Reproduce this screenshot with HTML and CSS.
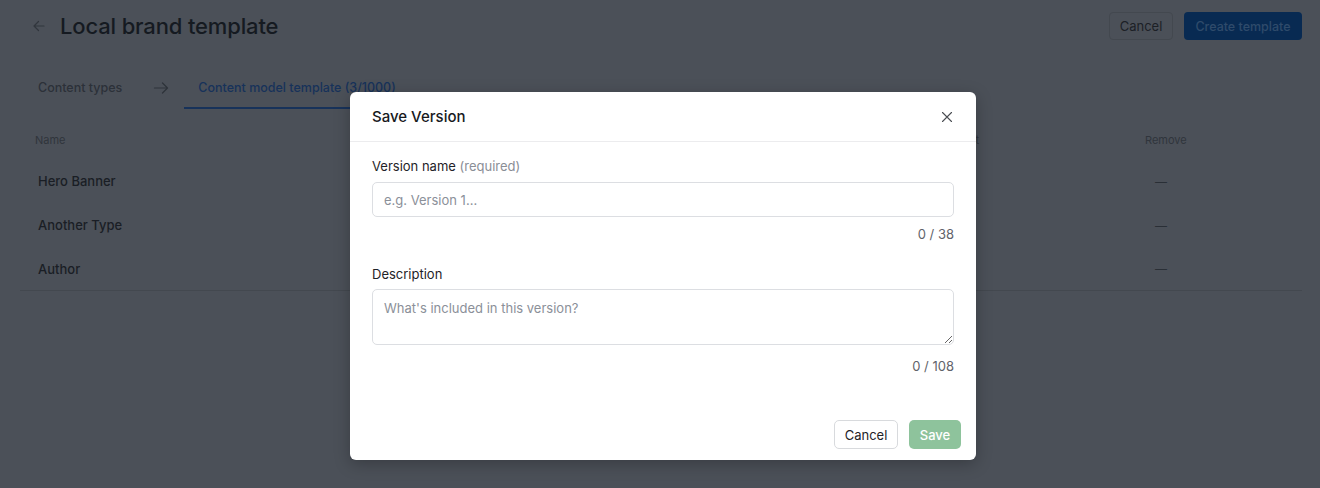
FILE: index.html
```html
<!DOCTYPE html>
<html lang="en">
<head>
<meta charset="utf-8">
<title>Local brand template</title>
<link rel="stylesheet" href="styles.css">
</head>
<body>
<div class="page">
  <header class="topbar">
    <div class="title-wrap">
      <span class="back">
        <svg width="14" height="14" viewBox="0 0 14 14" fill="none" stroke="currentColor" stroke-width="1.2" stroke-linecap="round" stroke-linejoin="round"><path d="M12 7H2M6.5 2.5L2 7l4.5 4.5"/></svg>
      </span>
      <h1 class="title">Local brand template</h1>
    </div>
    <div class="actions">
      <button class="btn btn-ghost">Cancel</button>
      <button class="btn btn-primary">Create template</button>
    </div>
  </header>

  <nav class="tabs">
    <span class="tab">Content types</span>
    <span class="tab-arrow">
      <svg width="16" height="14" viewBox="0 0 16 14" fill="none" stroke="currentColor" stroke-width="1.2" stroke-linecap="round" stroke-linejoin="round"><path d="M1.5 7h13M9.5 2l5 5-5 5"/></svg>
    </span>
    <span class="tab tab-active">Content model template (3/1000)</span>
  </nav>

  <div class="table">
    <div class="row head">
      <span class="c-name">Name</span>
      <span class="c-mid">Default</span>
      <span class="c-remove">Remove</span>
    </div>
    <div class="row">
      <span class="c-name strong">Hero Banner</span>
      <span class="c-mid"></span>
      <span class="c-remove dash">—</span>
    </div>
    <div class="row">
      <span class="c-name strong">Another Type</span>
      <span class="c-mid"></span>
      <span class="c-remove dash">—</span>
    </div>
    <div class="row last">
      <span class="c-name strong">Author</span>
      <span class="c-mid"></span>
      <span class="c-remove dash">—</span>
    </div>
  </div>
</div>

<div class="modal" role="dialog">
  <div class="modal-head">
    <h2 class="modal-title">Save Version</h2>
    <span class="close">
      <svg width="12" height="12" viewBox="0 0 12 12" fill="none" stroke="currentColor" stroke-width="1.1" stroke-linecap="round"><path d="M1.5 1.5l9 9M10.5 1.5l-9 9"/></svg>
    </span>
  </div>
  <div class="modal-body">
    <label class="label">Version name <span class="muted">(required)</span></label>
    <input class="field" type="text" placeholder="e.g. Version 1...">
    <div class="counter">0 / 38</div>

    <label class="label label-2">Description</label>
    <textarea class="field area" placeholder="What's included in this version?"></textarea>
    <div class="counter counter-2">0 / 108</div>
  </div>
  <div class="modal-foot">
    <button class="btn btn-outline">Cancel</button>
    <button class="btn btn-save">Save</button>
  </div>
</div>
</body>
</html>
```

FILE: styles.css
```css
* { box-sizing: border-box; }
html, body { margin: 0; padding: 0; }
body {
  width: 1320px;
  height: 488px;
  overflow: hidden;
  background: #4b5058;
  font-family: Inter, "Noto Sans", "Liberation Sans", sans-serif;
  color: #1a1e25;
  position: relative;
}
button { font-family: inherit; }

.page { padding: 12px 18px 0 20px; }

.topbar {
  display: flex;
  justify-content: space-between;
  align-items: center;
  height: 28px;
}
.title-wrap { display: flex; align-items: center; }
.back {
  color: #31363d;
  display: flex;
  margin-left: 12px;
  width: 28px;
}
.title {
  margin: 0;
  font-size: 22px;
  font-weight: 500;
  color: #151a21;
  letter-spacing: -0.15px;
}
.actions { display: flex; gap: 11px; }
.btn {
  height: 28px;
  border-radius: 4px;
  font-size: 13px;
  padding: 0 8px;
  border: 1px solid transparent;
  cursor: pointer;
  white-space: nowrap;
}
.btn-ghost {
  background: #4b5058;
  border-color: #43484f;
  color: #1c2026;
  width: 64px;
}
.btn-primary {
  background: #082a52;
  color: #2f4b6b;
  width: 118px;
  font-weight: 500;
  font-size: 12.5px;
}

.tabs {
  display: flex;
  align-items: center;
  margin-top: 31px;
  height: 38px;
}
.tab {
  font-size: 12.5px;
  font-weight: 500;
  color: #2c3139;
  padding: 0 14px 0 18px;
  height: 38px;
  line-height: 34px;
  white-space: nowrap;
}
.tab-arrow { color: #2e333a; display: flex; margin: 0 15px 0 17px; padding-bottom: 4px; }
.tab-active {
  color: #17325a;
  border-bottom: 2px solid #17325a;
  padding: 0 14px;
}

.table { margin-top: 20px; }
.row {
  display: flex;
  align-items: center;
  height: 44px;
}
.row.head { height: 22px; margin-bottom: 8px; }
.row.last { border-bottom: 1px solid #43484f; }
.c-name { width: 915px; padding-left: 15px; font-size: 11px; color: #30353c; }
.c-name.strong { font-size: 13px; font-weight: 500; color: #1a1e25; padding-left: 18px; }
.c-mid { width: 44px; font-size: 11px; color: #30353c; text-align: right; white-space: nowrap; }
.c-remove { width: 240px; padding-left: 166px; font-size: 11px; color: #30353c; white-space: nowrap; }
.c-remove.dash { padding-left: 176px; font-size: 12px; color: #2a2f36; }

.modal {
  position: absolute;
  left: 350px;
  top: 92px;
  width: 626px;
  height: 368px;
  background: #ffffff;
  border-radius: 6px;
  box-shadow: 0 4px 16px rgba(0, 0, 0, 0.25);
  display: flex;
  flex-direction: column;
}
.modal-head {
  height: 50px;
  border-bottom: 1px solid #ececee;
  display: flex;
  align-items: center;
  justify-content: space-between;
  padding: 0 23px 0 22px;
}
.modal-title {
  margin: 0;
  font-size: 15px;
  font-weight: 500;
  color: #17191d;
}
.close { color: #4a4d52; display: flex; }

.modal-body {
  padding: 16px 22px 0 22px;
  display: flex;
  flex-direction: column;
  flex: 1;
}
.label {
  font-size: 13px;
  color: #1f2328;
  line-height: 17px;
  margin-bottom: 7px;
}
.label-2 { margin-top: 23px; margin-bottom: 6px; }
.muted { color: #8a8e96; }
.field {
  width: 582px;
  height: 35px;
  border: 1px solid #dcdee2;
  border-radius: 5px;
  padding: 0 11px;
  font-family: inherit;
  font-size: 13px;
  color: #1f2328;
  outline: none;
}
.field::placeholder { color: #8b9099; }
.area {
  height: 56px;
  padding: 10px 11px;
  resize: vertical;
  display: block;
  line-height: 17px;
}
.counter {
  text-align: right;
  font-size: 13px;
  color: #5f636a;
  margin-top: 9px;
  line-height: 17px;
}
.counter-2 { margin-top: 13px; }

.modal-foot {
  display: flex;
  justify-content: flex-end;
  gap: 11px;
  padding: 0 15px 11px 0;
}
.btn-outline {
  height: 29px;
  width: 64px;
  background: #ffffff;
  border-color: #d8dadd;
  color: #1f2328;
  border-radius: 5px;
}
.btn-save {
  height: 29px;
  width: 52px;
  background: #8ec39c;
  color: #ffffff;
  font-weight: 500;
  border-radius: 5px;
}
```
